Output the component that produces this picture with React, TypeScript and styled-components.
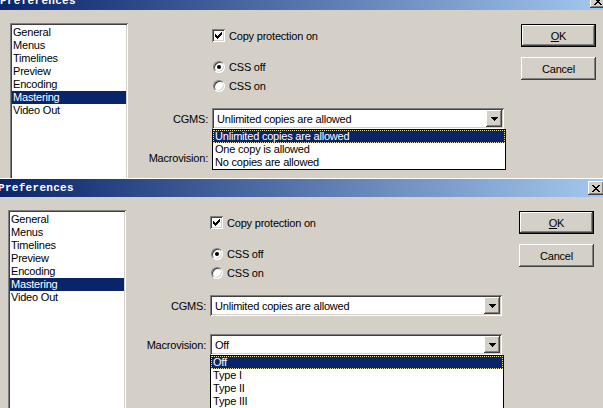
import React from 'react'
import styled, { createGlobalStyle, css } from 'styled-components'

const GlobalStyle = createGlobalStyle`
  html, body {
    margin: 0;
    padding: 0;
  }
  body {
    width: 603px;
    height: 408px;
    overflow: hidden;
    background: #d4d0c8;
    font-family: 'Liberation Sans', Arial, sans-serif;
    font-size: 11px;
    letter-spacing: -0.2px;
    color: #000;
  }
`

const raised = css`
  box-shadow: inset -1px -1px #404040, inset 1px 1px #ffffff,
    inset -2px -2px #808080, inset 2px 2px #d4d0c8;
`

const sunken = css`
  box-shadow: inset 1px 1px #808080, inset -1px -1px #ffffff,
    inset 2px 2px #404040, inset -2px -2px #d4d0c8;
`

const Screen = styled.div`
  display: flex;
  flex-direction: column;
  height: 408px;
  overflow: hidden;
`

const Window = styled.div<{ $shift: number; $top: number; $clip?: number }>`
  flex-shrink: 0;
  width: 614px;
  margin-left: ${p => p.$shift}px;
  margin-top: ${p => p.$top}px;
  ${p => (p.$clip ? `height: ${p.$clip}px; overflow: hidden;` : '')}
  background: #d4d0c8;
  border-top: 1px solid #ffffff;
`

const TitleBar = styled.div`
  height: 18px;
  display: flex;
  align-items: center;
  background: linear-gradient(to right, #0a246a, #a6caf0);
`

const Title = styled.span`
  font-family: 'Liberation Mono', 'Courier New', monospace;
  font-weight: bold;
  font-size: 11px;
  letter-spacing: 0.3px;
  color: #ffffff;
`

const CloseBox = styled.div`
  margin-left: auto;
  margin-right: 8px;
  width: 16px;
  height: 14px;
  background: #d4d0c8;
  ${raised};
  display: flex;
  align-items: center;
  justify-content: center;
`

const Body = styled.div`
  display: flex;
  align-items: flex-start;
  padding: 13px 0 0 10px;
`

const ListBox = styled.div`
  flex-shrink: 0;
  width: 118px;
  height: 200px;
  box-sizing: border-box;
  padding: 3px 2px 0 2px;
  background: #ffffff;
  ${sunken};
`

const ListItem = styled.div<{ $selected?: boolean }>`
  height: 13px;
  line-height: 13px;
  padding-left: 1px;
  white-space: nowrap;
  background: ${p => (p.$selected ? '#0a246a' : 'transparent')};
  color: ${p => (p.$selected ? '#ffffff' : '#000000')};
`

const Options = styled.div`
  flex-shrink: 0;
  width: 376px;
  display: flex;
  flex-direction: column;
`

const ToggleRow = styled.div<{ $gap: number }>`
  display: flex;
  align-items: center;
  gap: 4px;
  height: 13px;
  margin-top: ${p => p.$gap}px;
  padding-left: 84px;
  white-space: nowrap;
`

const CheckBox = styled.span`
  width: 13px;
  height: 13px;
  box-sizing: border-box;
  background: #ffffff;
  ${sunken};
  display: flex;
  align-items: center;
  justify-content: center;
`

const RadioDot = styled.span<{ $checked?: boolean }>`
  width: 12px;
  height: 12px;
  margin-left: 1px;
  box-sizing: border-box;
  border-radius: 50%;
  border: 1px solid;
  border-color: #808080 #ffffff #ffffff #808080;
  background: #ffffff;
  box-shadow: inset 1px 1px #404040, inset -1px -1px #d4d0c8;
  display: flex;
  align-items: center;
  justify-content: center;

  &::after {
    content: '';
    width: 4px;
    height: 4px;
    border-radius: 50%;
    background: ${p => (p.$checked ? '#000000' : 'transparent')};
  }
`

const FieldRow = styled.div<{ $gap: number }>`
  display: flex;
  align-items: center;
  gap: 4px;
  height: 21px;
  margin-top: ${p => p.$gap}px;
`

const FieldLabel = styled.span`
  width: 80px;
  text-align: right;
  white-space: nowrap;
`

const SelectWrap = styled.div`
  position: relative;
  width: 292px;
  height: 21px;
`

const SelectBox = styled.div`
  height: 100%;
  box-sizing: border-box;
  padding: 2px;
  display: flex;
  align-items: center;
  background: #ffffff;
  ${sunken};
`

const SelectValue = styled.span`
  flex: 1;
  padding-left: 3px;
  white-space: nowrap;
`

const ArrowButton = styled.span`
  width: 16px;
  height: 17px;
  background: #d4d0c8;
  ${raised};
  display: flex;
  align-items: center;
  justify-content: center;
`

const DropList = styled.div`
  position: absolute;
  z-index: 2;
  top: 100%;
  left: 0;
  right: -2px;
  background: #ffffff;
  border: 1px solid #000000;
`

const DropItem = styled.div<{ $selected?: boolean }>`
  height: 13px;
  line-height: 13px;
  padding-left: 2px;
  white-space: nowrap;
  background: ${p => (p.$selected ? '#0a246a' : 'transparent')};
  color: ${p => (p.$selected ? '#ffffff' : '#000000')};
  ${p => (p.$selected ? 'outline: 1px dotted #e8e0a0; outline-offset: -1px;' : '')}
`

const Buttons = styled.div`
  display: flex;
  flex-direction: column;
  gap: 10px;
  margin: 1px 0 0 17px;
`

const PushButton = styled.div<{ $default?: boolean }>`
  width: 75px;
  height: 23px;
  box-sizing: border-box;
  display: flex;
  align-items: center;
  justify-content: center;
  background: #d4d0c8;
  border: ${p => (p.$default ? '1px solid #000000' : 'none')};
  ${raised};
`

const Mnemonic = styled.span`
  text-decoration: underline;
`

const CheckMark = () => (
  <svg width="7" height="7" viewBox="0 0 7 7" shapeRendering="crispEdges">
    <path
      d="M0 2h1v3H0zM1 3h1v3H1zM2 4h1v3H2zM3 3h1v3H3zM4 2h1v3H4zM5 1h1v3H5zM6 0h1v3H6z"
      fill="#000"
    />
  </svg>
)

const CloseGlyph = () => (
  <svg width="8" height="7" viewBox="0 0 8 7" shapeRendering="crispEdges">
    <path
      d="M0 0h2v1H0zM6 0h2v1H6zM1 1h2v1H1zM5 1h2v1H5zM2 2h4v1H2zM3 3h2v1H3zM2 4h4v1H2zM1 5h2v1H1zM5 5h2v1H5zM0 6h2v1H0zM6 6h2v1H6z"
      fill="#000"
    />
  </svg>
)

const DownArrow = () => (
  <svg width="7" height="4" viewBox="0 0 7 4" shapeRendering="crispEdges">
    <path d="M0 0h7v1H0zM1 1h5v1H1zM2 2h3v1H2zM3 3h1v1H3z" fill="#000" />
  </svg>
)

const pages = [
  'General',
  'Menus',
  'Timelines',
  'Preview',
  'Encoding',
  'Mastering',
  'Video Out'
]

const cgmsOptions = [
  'Unlimited copies are allowed',
  'One copy is allowed',
  'No copies are allowed'
]

const macroOptions = ['Off', 'Type I', 'Type II', 'Type III']

type Field = {
  label: string
  value: string
  options: string[]
  gap: number
}

const fields: Field[] = [
  { label: 'CGMS:', value: cgmsOptions[0], options: cgmsOptions, gap: 16 },
  { label: 'Macrovision:', value: macroOptions[0], options: macroOptions, gap: 18 }
]

function Select({ field, open }: { field: Field; open: boolean }) {
  return (
    <FieldRow $gap={field.gap}>
      <FieldLabel>{field.label}</FieldLabel>
      <SelectWrap>
        <SelectBox>
          <SelectValue>{field.value}</SelectValue>
          <ArrowButton>
            <DownArrow />
          </ArrowButton>
        </SelectBox>
        {open && (
          <DropList>
            {field.options.map(o => (
              <DropItem key={o} $selected={o === field.value}>
                {o}
              </DropItem>
            ))}
          </DropList>
        )}
      </SelectWrap>
    </FieldRow>
  )
}

function Preferences({
  openField,
  shift,
  top,
  clip
}: {
  openField: string
  shift: number
  top: number
  clip?: number
}) {
  return (
    <Window $shift={shift} $top={top} $clip={clip}>
      <TitleBar>
        <Title>Preferences</Title>
        <CloseBox>
          <CloseGlyph />
        </CloseBox>
      </TitleBar>
      <Body>
        <ListBox>
          {pages.map(p => (
            <ListItem key={p} $selected={p === 'Mastering'}>
              {p}
            </ListItem>
          ))}
        </ListBox>
        <Options>
          <ToggleRow $gap={6}>
            <CheckBox>
              <CheckMark />
            </CheckBox>
            Copy protection on
          </ToggleRow>
          <ToggleRow $gap={18}>
            <RadioDot $checked />
            CSS off
          </ToggleRow>
          <ToggleRow $gap={6}>
            <RadioDot />
            CSS on
          </ToggleRow>
          {fields.map(f => (
            <Select key={f.label} field={f} open={f.label === openField} />
          ))}
        </Options>
        <Buttons>
          <PushButton $default>
            <Mnemonic>O</Mnemonic>K
          </PushButton>
          <PushButton>Cancel</PushButton>
        </Buttons>
      </Body>
    </Window>
  )
}

export default function App() {
  return (
    <Screen>
      <GlobalStyle />
      <Preferences openField="CGMS:" shift={0} top={-9} clip={186} />
      <Preferences openField="Macrovision:" shift={-2} top={0} />
    </Screen>
  )
}
